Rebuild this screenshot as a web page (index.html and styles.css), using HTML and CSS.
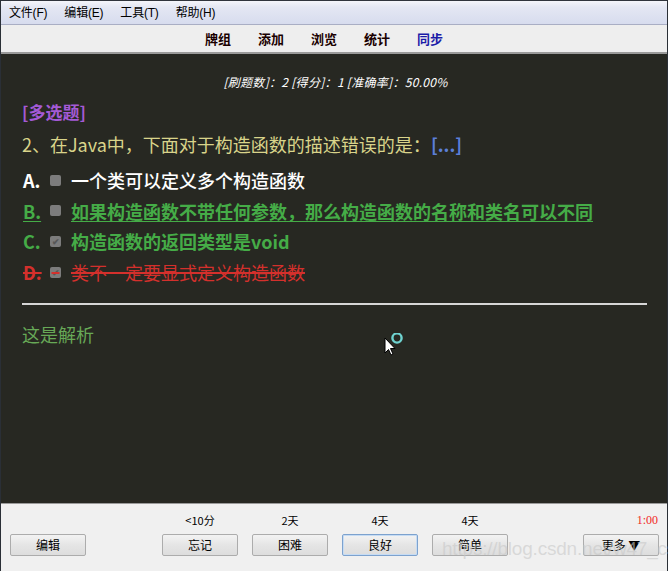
FILE: index.html
```html
<!DOCTYPE html>
<html lang="zh">
<head>
<meta charset="utf-8">
<title>Anki</title>
<link rel="stylesheet" href="styles.css">
</head>
<body>
<div class="window">
  <div class="menubar">
    <span class="menu">文件(F)</span>
    <span class="menu">编辑(E)</span>
    <span class="menu">工具(T)</span>
    <span class="menu">帮助(H)</span>
  </div>
  <div class="toolbar">
    <span class="tab">牌组</span>
    <span class="tab">添加</span>
    <span class="tab">浏览</span>
    <span class="tab">统计</span>
    <span class="tab sync">同步</span>
  </div>
  <div class="content">
    <div class="stats">[刷题数]：2 [得分]：1 [准确率]：50.00%</div>
    <div class="qtype">[多选题]</div>
    <div class="question">2、在Java中，下面对于构造函数的描述错误的是：<span class="blank">[...]</span></div>
    <div class="options">
      <div class="opt opt-plain"><span class="letter">A.</span><span class="box"></span><span class="otext">一个类可以定义多个构造函数</span></div>
      <div class="opt opt-missed"><span class="letter">B.</span><span class="box"></span><span class="otext">如果构造函数不带任何参数，那么构造函数的名称和类名可以不同</span></div>
      <div class="opt opt-right"><span class="letter">C.</span><span class="box checked">✔</span><span class="otext">构造函数的返回类型是void</span></div>
      <div class="opt opt-wrong"><span class="letter">D.</span><span class="box checked">✔</span><span class="otext">类不一定要显式定义构造函数</span></div>
    </div>
    <div class="rule"></div>
    <div class="analysis">这是解析</div>
    <svg class="cursor" width="24" height="24" viewBox="0 0 24 24">
      <path d="M1 5 L1 20 L4.5 16.5 L7 22 L9 21 L6.5 15.5 L11 15.5 Z" fill="#ffffff" stroke="#000" stroke-width="1"/>
      <circle cx="13" cy="5" r="4.6" fill="none" stroke="#6fd3d0" stroke-width="2.4"/>
    </svg>
  </div>
  <div class="bottom">
    <div class="col col-edit"><span class="lbl"></span><button class="btn">编辑</button></div>
    <div class="col"><span class="lbl">&lt;10分</span><button class="btn">忘记</button></div>
    <div class="col"><span class="lbl">2天</span><button class="btn">困难</button></div>
    <div class="col"><span class="lbl">4天</span><button class="btn focus">良好</button></div>
    <div class="col"><span class="lbl">4天</span><button class="btn">简单</button></div>
    <div class="col col-more"><span class="lbl timer">1:00</span><button class="btn">更多 ▼</button></div>
    <div class="watermark">https://blog.csdn.net/w47_csdn</div>
  </div>
</div>
</body>
</html>
```

FILE: styles.css
```css
html, body {
  margin: 0;
  padding: 0;
  background: #f0f0f0;
}
body {
  width: 668px;
  height: 571px;
  overflow: hidden;
  font-family: "Liberation Sans", "Noto Sans CJK SC", sans-serif;
}
.window {
  width: 668px;
  height: 571px;
  display: flex;
  flex-direction: column;
  border-left: 1px solid #2a2f36;
  border-right: 1px solid #2a2f36;
  box-sizing: border-box;
  position: relative;
}
.menubar {
  height: 25px;
  box-sizing: border-box;
  border-top: 1px solid #30343c;
  border-bottom: 1px solid #a9aec4;
  background: linear-gradient(#f4f5fa 0px, #e4e7f3 6px, #d7dcee 100%);
  display: flex;
  align-items: center;
  padding-left: 8px;
  gap: 17px;
  font-size: 12px;
  color: #000;
}
.menu {
  line-height: 14px;
  letter-spacing: -0.2px;
}
.toolbar {
  height: 29px;
  box-sizing: border-box;
  background: #eeeeee;
  border-bottom: 2px solid #9a9a9a;
  display: flex;
  align-items: center;
  padding-left: 204px;
  gap: 27px;
  font-size: 13px;
  font-weight: bold;
  color: #1a0000;
}
.tab {
  width: 26px;
  white-space: nowrap;
}
.tab.sync {
  color: #1c1ca8;
}
.content {
  flex: 1;
  background: #272822;
  padding: 0 20px 0 21px;
  position: relative;
  font-family: "Noto Sans CJK SC", "Liberation Sans", sans-serif;
}
.stats {
  margin-top: 20px;
  text-align: center;
  font-size: 12px;
  font-style: italic;
  color: #ffffff;
  line-height: 16px;
  padding-left: 2px;
  letter-spacing: 0.3px;
}
.qtype {
  margin-top: 11px;
  font-size: 17px;
  font-weight: bold;
  color: #a45ad6;
  line-height: 22px;
}
.question {
  margin-top: 9px;
  font-size: 18px;
  color: #d9d48a;
  line-height: 24px;
}
.blank {
  color: #5b7fd8;
  font-weight: bold;
}
.options {
  margin-top: 12px;
  display: flex;
  flex-direction: column;
  gap: 6.7px;
}
.opt {
  display: flex;
  align-items: center;
  font-size: 18px;
  line-height: 24px;
  white-space: nowrap;
}
.letter {
  width: 27px;
  font-weight: bold;
  padding-left: 1px;
}
.box {
  width: 11px;
  height: 11px;
  border-radius: 2px;
  background: #7c7c7c;
  margin-right: 10px;
  font-size: 9px;
  line-height: 11px;
  text-align: center;
  color: #575757;
  font-weight: bold;
}
.opt-plain { color: #ffffff; }
.opt-plain .otext { font-weight: 500; }
.opt-missed, .opt-right { color: #45ac47; font-weight: bold; }
.opt-missed { text-decoration: underline; text-decoration-thickness: 1px; text-underline-offset: 2px; }
.opt-wrong { color: #d4302c; text-decoration: line-through; text-decoration-thickness: 2px; }
.rule {
  margin-top: 19px;
  height: 2px;
  background: #d6d6d6;
}
.analysis {
  margin-top: 17px;
  font-size: 18px;
  color: #67a957;
  line-height: 24px;
}
.cursor {
  position: absolute;
  left: 383px;
  top: 279px;
}
.bottom {
  height: 68px;
  box-sizing: border-box;
  border-top: 1px solid #9a9a9a;
  background: #f0f0f0;
  display: flex;
  padding: 5px 8px 0 9px;
  position: relative;
  font-family: "Noto Sans CJK SC", "Liberation Sans", sans-serif;
}
.col {
  display: flex;
  flex-direction: column;
  align-items: center;
  width: 76px;
  margin-right: 14px;
}
.col-edit {
  margin-right: 76px;
}
.col-more {
  margin-left: 61px;
  margin-right: 0;
  align-items: stretch;
}
.lbl {
  height: 22px;
  font-size: 11px;
  line-height: 22px;
  color: #000;
}
.timer {
  text-align: right;
  color: #f0281e;
  font-family: "Liberation Serif", serif;
  font-size: 12px;
  padding-right: 1px;
}
.btn {
  margin-top: 3px;
  width: 76px;
  height: 22px;
  box-sizing: border-box;
  border: 1px solid #acacac;
  border-radius: 2px;
  background: linear-gradient(#f3f3f3, #e5e5e5 50%, #dddddd);
  font-family: "Noto Sans CJK SC", sans-serif;
  font-size: 12px;
  color: #000;
  padding: 0;
  line-height: 18px;
}
.btn.focus {
  border-color: #7da2ce;
  box-shadow: inset 0 0 0 1px #c6dcf4;
}
.watermark {
  position: absolute;
  left: 441px;
  top: 34px;
  font-family: "Liberation Sans", sans-serif;
  font-size: 19px;
  color: rgba(200, 200, 200, 0.6);
  white-space: nowrap;
  letter-spacing: -0.2px;
  pointer-events: none;
}
```
